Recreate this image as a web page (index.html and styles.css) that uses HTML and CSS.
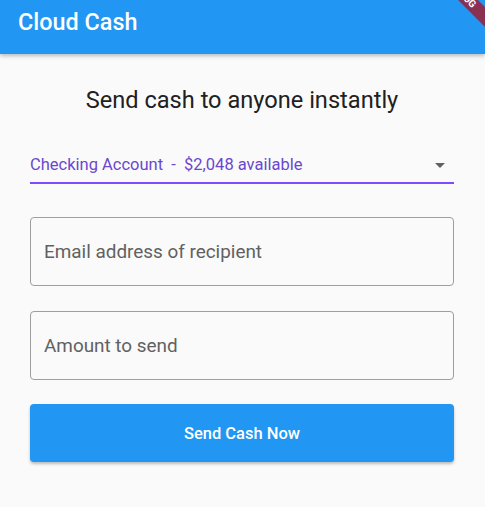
FILE: index.html
```html
<!DOCTYPE html>
<html>
<head>
<meta charset="utf-8">
<link rel="stylesheet" href="styles.css">
</head>
<body>
<div class="app">
  <header class="appbar">
    <h1 class="title">Cloud Cash</h1>
  </header>
  <main class="content">
    <h2 class="heading">Send cash to anyone instantly</h2>
    <div class="dropdown">
      <span class="dropdown-text">Checking Account&nbsp; -&nbsp; $2,048 available</span>
      <svg class="arrow" width="10" height="5" viewBox="0 0 10 5"><path d="M0 0 L10 0 L5 5 Z" fill="#616161"/></svg>
    </div>
    <div class="field"><span class="placeholder">Email address of recipient</span></div>
    <div class="field"><span class="placeholder">Amount to send</span></div>
    <button class="send">Send Cash Now</button>
  </main>
  <div class="banner-wrap"><div class="banner">DEBUG</div></div>
</div>
</body>
</html>
```
FILE: styles.css
```css
* { box-sizing: border-box; }
html, body { margin: 0; padding: 0; }
body {
  background: #fafafa;
  font-family: Roboto, "Noto Sans", sans-serif;
  width: 485px;
  height: 507px;
  overflow: hidden;
}
.app { position: relative; height: 507px; }
.appbar {
  height: 54px;
  background: #2196f3;
  display: flex;
  align-items: flex-start;
  padding: 8px 0 0 18px;
  box-shadow: 0 2px 4px rgba(0,0,0,0.25);
  position: relative;
  z-index: 1;
}
.title {
  margin: 0;
  color: #fff;
  font-size: 23.4px;
  font-weight: 500;
  line-height: 28px;
}
.content {
  display: flex;
  flex-direction: column;
  padding: 0 31px 0 30px;
}
.heading {
  margin: 32px 0 0;
  text-align: center;
  font-weight: 400;
  font-size: 23.6px;
  color: #212121;
  line-height: 28px;
}
.dropdown {
  margin-top: 41px;
  height: 29px;
  border-bottom: 2px solid #7c4dff;
  display: flex;
  align-items: flex-start;
  justify-content: space-between;
  padding-right: 9px;
}
.dropdown-text {
  color: #6b47cf;
  font-size: 16.5px;
  line-height: 20px;
  margin-top: 0;
}
.arrow { margin-top: 8px; }
.field {
  height: 69px;
  border: 1px solid #9e9e9e;
  border-radius: 4px;
  display: flex;
  align-items: center;
  padding-left: 13px;
  margin-top: 33px;
}
.field + .field { margin-top: 25px; }
.placeholder {
  color: #616161;
  font-size: 18.9px;
}
.send {
  margin-top: 24px;
  height: 58px;
  border: none;
  border-radius: 4px;
  background: #2196f3;
  color: #fff;
  font-family: Roboto, sans-serif;
  font-size: 16.5px;
  font-weight: 500;
  box-shadow: 0 2px 3px rgba(0,0,0,0.25);
}
.banner-wrap {
  position: absolute;
  top: 0;
  right: 0;
  width: 60px;
  height: 60px;
  overflow: hidden;
  z-index: 2;
}
.banner {
  position: absolute;
  width: 120px;
  height: 14px;
  background: #8a3050;
  color: #fff;
  font-size: 10px;
  font-weight: 700;
  line-height: 14px;
  text-align: center;
  transform: rotate(45deg);
  top: -12px;
  left: -22px;
}
```
